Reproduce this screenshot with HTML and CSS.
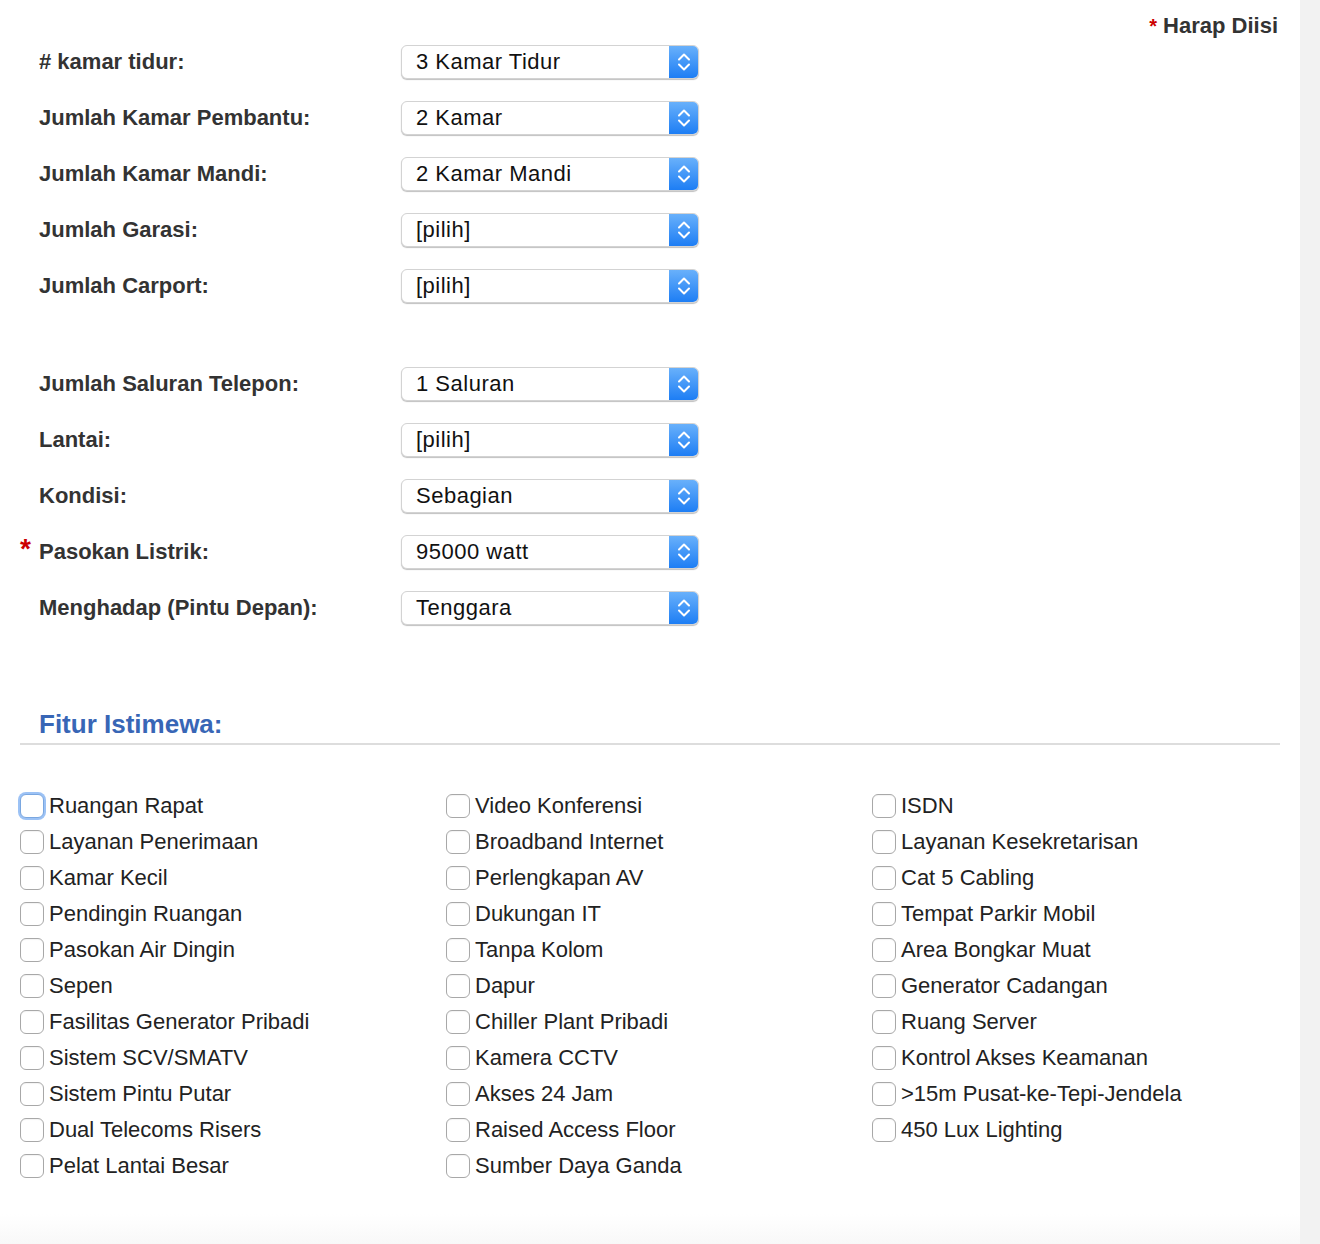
FILE: index.html
```html
<!DOCTYPE html>
<html>
<head>
<meta charset="utf-8">
<link rel="stylesheet" href="styles.css">
</head>
<body>
<div class="page">
  <div class="required-note"><span class="star">*</span> Harap Diisi</div>

  <div class="form-rows">
    <div class="row"><label class="lbl"># kamar tidur:</label><div class="select"><span class="val">3 Kamar Tidur</span><span class="arrow"><svg width="16" height="26" viewBox="0 0 16 26"><path d="M3 10.5 L8 5.5 L13 10.5 M3 15.5 L8 20.5 L13 15.5" fill="none" stroke="#fff" stroke-width="2" stroke-linecap="round" stroke-linejoin="round"/></svg></span></div></div>
    <div class="row"><label class="lbl">Jumlah Kamar Pembantu:</label><div class="select"><span class="val">2 Kamar</span><span class="arrow"><svg width="16" height="26" viewBox="0 0 16 26"><path d="M3 10.5 L8 5.5 L13 10.5 M3 15.5 L8 20.5 L13 15.5" fill="none" stroke="#fff" stroke-width="2" stroke-linecap="round" stroke-linejoin="round"/></svg></span></div></div>
    <div class="row"><label class="lbl">Jumlah Kamar Mandi:</label><div class="select"><span class="val">2 Kamar Mandi</span><span class="arrow"><svg width="16" height="26" viewBox="0 0 16 26"><path d="M3 10.5 L8 5.5 L13 10.5 M3 15.5 L8 20.5 L13 15.5" fill="none" stroke="#fff" stroke-width="2" stroke-linecap="round" stroke-linejoin="round"/></svg></span></div></div>
    <div class="row"><label class="lbl">Jumlah Garasi:</label><div class="select"><span class="val">[pilih]</span><span class="arrow"><svg width="16" height="26" viewBox="0 0 16 26"><path d="M3 10.5 L8 5.5 L13 10.5 M3 15.5 L8 20.5 L13 15.5" fill="none" stroke="#fff" stroke-width="2" stroke-linecap="round" stroke-linejoin="round"/></svg></span></div></div>
    <div class="row"><label class="lbl">Jumlah Carport:</label><div class="select"><span class="val">[pilih]</span><span class="arrow"><svg width="16" height="26" viewBox="0 0 16 26"><path d="M3 10.5 L8 5.5 L13 10.5 M3 15.5 L8 20.5 L13 15.5" fill="none" stroke="#fff" stroke-width="2" stroke-linecap="round" stroke-linejoin="round"/></svg></span></div></div>
    <div class="spacer"></div>
    <div class="row"><label class="lbl">Jumlah Saluran Telepon:</label><div class="select"><span class="val">1 Saluran</span><span class="arrow"><svg width="16" height="26" viewBox="0 0 16 26"><path d="M3 10.5 L8 5.5 L13 10.5 M3 15.5 L8 20.5 L13 15.5" fill="none" stroke="#fff" stroke-width="2" stroke-linecap="round" stroke-linejoin="round"/></svg></span></div></div>
    <div class="row"><label class="lbl">Lantai:</label><div class="select"><span class="val">[pilih]</span><span class="arrow"><svg width="16" height="26" viewBox="0 0 16 26"><path d="M3 10.5 L8 5.5 L13 10.5 M3 15.5 L8 20.5 L13 15.5" fill="none" stroke="#fff" stroke-width="2" stroke-linecap="round" stroke-linejoin="round"/></svg></span></div></div>
    <div class="row"><label class="lbl">Kondisi:</label><div class="select"><span class="val">Sebagian</span><span class="arrow"><svg width="16" height="26" viewBox="0 0 16 26"><path d="M3 10.5 L8 5.5 L13 10.5 M3 15.5 L8 20.5 L13 15.5" fill="none" stroke="#fff" stroke-width="2" stroke-linecap="round" stroke-linejoin="round"/></svg></span></div></div>
    <div class="row"><label class="lbl"><span class="req">*</span>Pasokan Listrik:</label><div class="select"><span class="val">95000 watt</span><span class="arrow"><svg width="16" height="26" viewBox="0 0 16 26"><path d="M3 10.5 L8 5.5 L13 10.5 M3 15.5 L8 20.5 L13 15.5" fill="none" stroke="#fff" stroke-width="2" stroke-linecap="round" stroke-linejoin="round"/></svg></span></div></div>
    <div class="row"><label class="lbl">Menghadap (Pintu Depan):</label><div class="select"><span class="val">Tenggara</span><span class="arrow"><svg width="16" height="26" viewBox="0 0 16 26"><path d="M3 10.5 L8 5.5 L13 10.5 M3 15.5 L8 20.5 L13 15.5" fill="none" stroke="#fff" stroke-width="2" stroke-linecap="round" stroke-linejoin="round"/></svg></span></div></div>
  </div>

  <h2 class="section-title">Fitur Istimewa:</h2>

  <div class="features">
    <div class="col">
      <label class="cb"><span class="box focus"></span>Ruangan Rapat</label>
      <label class="cb"><span class="box"></span>Layanan Penerimaan</label>
      <label class="cb"><span class="box"></span>Kamar Kecil</label>
      <label class="cb"><span class="box"></span>Pendingin Ruangan</label>
      <label class="cb"><span class="box"></span>Pasokan Air Dingin</label>
      <label class="cb"><span class="box"></span>Sepen</label>
      <label class="cb"><span class="box"></span>Fasilitas Generator Pribadi</label>
      <label class="cb"><span class="box"></span>Sistem SCV/SMATV</label>
      <label class="cb"><span class="box"></span>Sistem Pintu Putar</label>
      <label class="cb"><span class="box"></span>Dual Telecoms Risers</label>
      <label class="cb"><span class="box"></span>Pelat Lantai Besar</label>
    </div>
    <div class="col">
      <label class="cb"><span class="box"></span>Video Konferensi</label>
      <label class="cb"><span class="box"></span>Broadband Internet</label>
      <label class="cb"><span class="box"></span>Perlengkapan AV</label>
      <label class="cb"><span class="box"></span>Dukungan IT</label>
      <label class="cb"><span class="box"></span>Tanpa Kolom</label>
      <label class="cb"><span class="box"></span>Dapur</label>
      <label class="cb"><span class="box"></span>Chiller Plant Pribadi</label>
      <label class="cb"><span class="box"></span>Kamera CCTV</label>
      <label class="cb"><span class="box"></span>Akses 24 Jam</label>
      <label class="cb"><span class="box"></span>Raised Access Floor</label>
      <label class="cb"><span class="box"></span>Sumber Daya Ganda</label>
    </div>
    <div class="col">
      <label class="cb"><span class="box"></span>ISDN</label>
      <label class="cb"><span class="box"></span>Layanan Kesekretarisan</label>
      <label class="cb"><span class="box"></span>Cat 5 Cabling</label>
      <label class="cb"><span class="box"></span>Tempat Parkir Mobil</label>
      <label class="cb"><span class="box"></span>Area Bongkar Muat</label>
      <label class="cb"><span class="box"></span>Generator Cadangan</label>
      <label class="cb"><span class="box"></span>Ruang Server</label>
      <label class="cb"><span class="box"></span>Kontrol Akses Keamanan</label>
      <label class="cb"><span class="box"></span>&gt;15m Pusat-ke-Tepi-Jendela</label>
      <label class="cb"><span class="box"></span>450 Lux Lighting</label>
    </div>
  </div>
  <div class="bottom-fade"></div>
</div>
</body>
</html>
```

FILE: styles.css
```css
html, body {
  margin: 0;
  padding: 0;
}
body {
  background: #f2f2f2;
  font-family: "Liberation Sans", Arial, Helvetica, sans-serif;
  color: #333;
  width: 1320px;
  height: 1244px;
  overflow: hidden;
}
.page {
  width: 1260px;
  height: 1244px;
  background: #fff;
  padding: 0 20px;
  position: relative;
}
.required-note {
  height: 34px;
  box-sizing: border-box;
  padding-top: 14px;
  line-height: 24px;
  text-align: right;
  font-weight: bold;
  font-size: 22px;
  color: #333;
  padding-right: 2px;
}
.star {
  color: #c00;
  font-size: 20px;
}
.form-rows {
  display: flex;
  flex-direction: column;
}
.row {
  height: 56px;
  display: flex;
  align-items: center;
}
.spacer {
  height: 42px;
}
.lbl {
  width: 381px;
  padding-left: 19px;
  box-sizing: border-box;
  font-weight: bold;
  font-size: 22px;
  color: #333;
  position: relative;
}
.req {
  position: absolute;
  left: 0;
  top: -6px;
  color: #c00;
  font-size: 28px;
}
.select {
  width: 298px;
  height: 34px;
  box-sizing: border-box;
  border: 1px solid #d3d3d3;
  border-radius: 6px;
  box-shadow: 0 1px 1px rgba(0,0,0,0.25);
  display: flex;
  align-items: center;
  background: #fff;
  overflow: hidden;
}
.val {
  flex: 1;
  padding-left: 14px;
  font-size: 22px;
  letter-spacing: 0.5px;
  color: #111;
  white-space: nowrap;
}
.arrow {
  width: 30px;
  height: 34px;
  margin: -1px -1px -1px 0;
  background: linear-gradient(#6bb2fb, #1b7cf4);
  display: flex;
  align-items: center;
  justify-content: center;
}
.section-title {
  margin: 76px 0 0 0;
  padding: 0 0 7px 19px;
  line-height: 24px;
  font-size: 26px;
  font-weight: bold;
  color: #3866b6;
  border-bottom: 2px solid #ddd;
}
.features {
  margin-top: 43px;
  display: grid;
  grid-template-columns: 426px 426px 1fr;
}
.col {
  display: flex;
  flex-direction: column;
}
.cb {
  height: 36px;
  display: flex;
  align-items: center;
  font-size: 22px;
  color: #222;
  white-space: nowrap;
}
.box {
  width: 24px;
  height: 24px;
  box-sizing: border-box;
  border: 1px solid #a8a8a8;
  border-radius: 6px;
  background: #fff;
  margin-right: 5px;
  flex: none;
  box-shadow: inset 0 1px 1px rgba(0,0,0,0.05);
}
.box.focus {
  border-color: #7aa7e0;
  box-shadow: 0 0 0 2px #9cc2f5;
}
.bottom-fade {
  position: absolute;
  left: 0;
  right: 0;
  bottom: 0;
  height: 30px;
  background: linear-gradient(rgba(248,248,248,0), #f8f8f8);
}
```
